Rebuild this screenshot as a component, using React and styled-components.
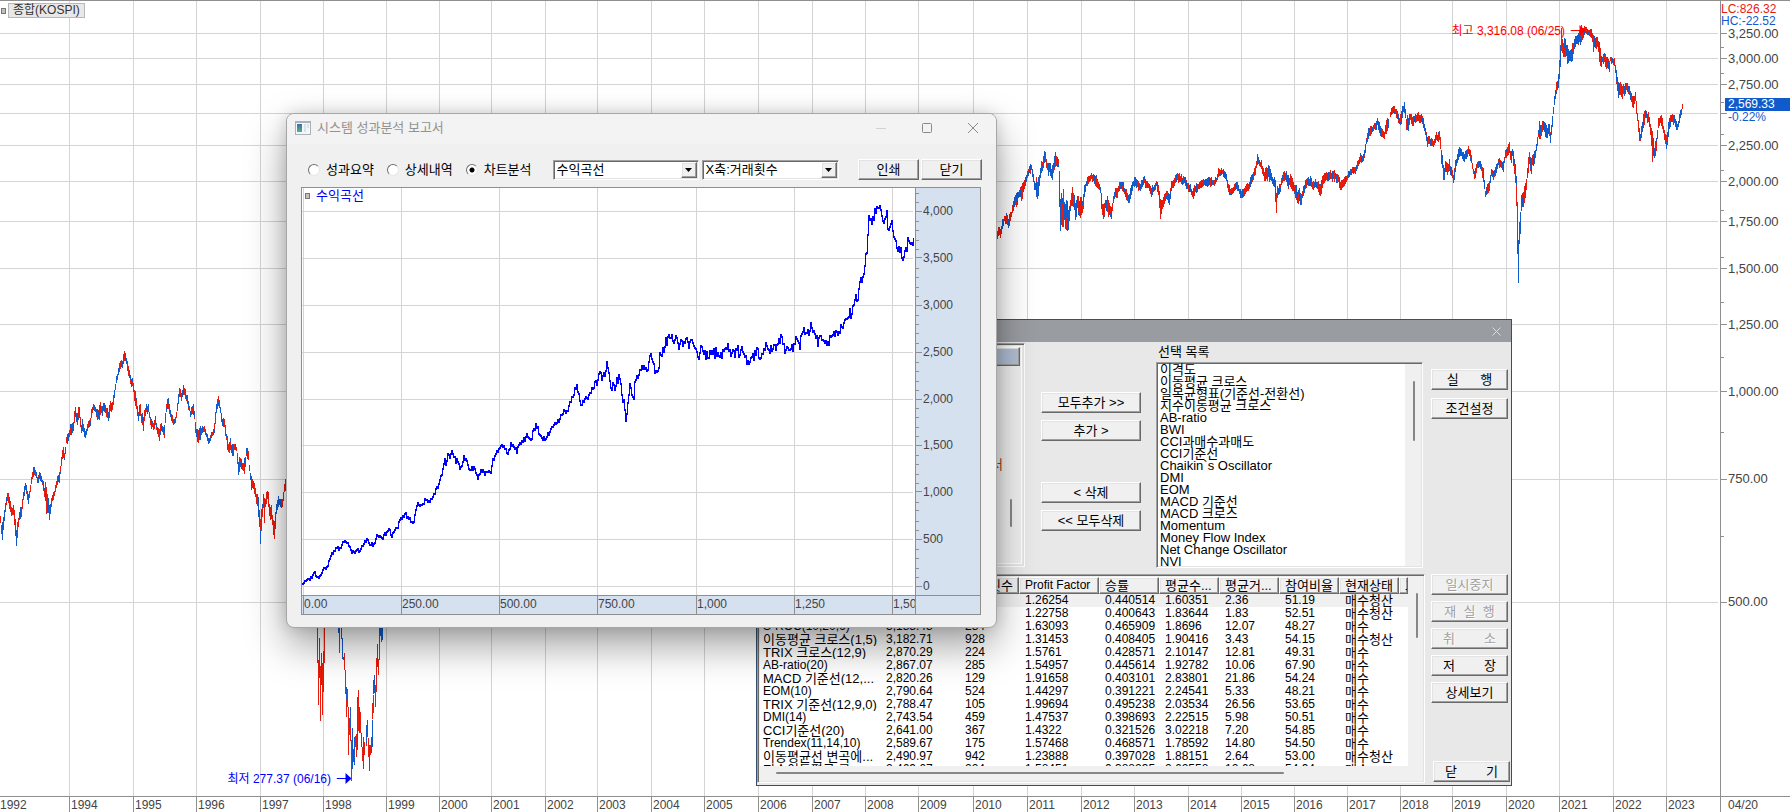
import React from "react";
import styled, { createGlobalStyle, css } from "styled-components";

const SANS = `"Liberation Sans", "Noto Sans CJK KR", sans-serif`;

const RED = "#e81c0c";
const BLUE = "#115acc";
const AXIS = "#8f8f8f";
const GRID = "#d4d4d4";

const GlobalStyle = createGlobalStyle`
  * { box-sizing: border-box; }
  body { margin: 0; background: #fff; font: 13px/16px ${SANS}; color: #000; overflow: hidden; }
  button, select, input { font: inherit; color: inherit; margin: 0; }
`;

/* ---------- chart data ---------- */

const random = (seed) => {
  let s = seed;
  return () => {
    s = (s * 1664525 + 1013904223) % 4294967296;
    return s / 4294967296;
  };
};

// Each run is an origin and a flat list of x, middle, half range, in thirds of a unit.
const RUNS = [
  [0, 330, [0,565,10,5,610,20,12,555,20,20,500,16,27,515,20,33,545,15,40,540,20,48,620,22,56,560,18,63,545,20,68,500,15,75,465,12,84,505,12,90,470,10,97,425,12,101,420,15,107,430,8,112,450,12,118,435,12,125,450,10,133,490,18,138,500,50,142,510,30,146,550,20,152,520,12,158,495,12,163,485,10,170,450,12,177,440,15,183,395,12,188,355,20,193,380,10,198,330,12,205,315,16,212,295,15,218,300,18,224,235,25,230,270,20,236,240,20,242,300,15,247,280,20,254,318,10,262,290,10,270,270,15,277,232,10,285,235,10,292,260,20,300,240,20,306,235,15,312,230,12,318,245,10,325,255,15,330,225,15,336,230,12,342,190,12,348,150,12,356,115,10,361,95,14,366,100,12,372,75,13,378,90,12,384,120,15,391,155,12,397,150,12,402,190,20,408,220,15,414,255,20,418,230,15,424,265,18,430,275,22,437,230,12,444,235,15,450,275,16,456,280,16,461,295,20,464,265,15,470,295,12,476,320,20,481,290,12,487,300,10,492,300,20,497,240,20,501,215,18,507,235,15,514,265,12,520,275,10,527,265,10,532,215,15,538,180,10,543,200,10,548,178,12,555,190,12,562,210,12,570,250,14,578,235,12,582,255,25,587,305,12,592,320,20,597,315,25,603,305,12,608,295,8,614,300,10,620,320,8,626,335,12,633,315,8,640,305,10,645,265,20,650,215,20,655,208,14,660,240,15,666,275,12,672,280,12,678,320,15,684,355,18,690,345,20,697,365,18,702,350,10,708,355,12,714,410,25,720,400,15,727,410,15,732,410,20,738,365,15,743,365,20,748,425,12,753,460,20,758,455,15,765,490,14,773,520,25,780,590,40,784,575,50,788,505,20,792,535,35,798,500,15,803,490,20,807,540,20,813,550,20,819,590,20,823,600,30,827,540,15,833,510,15,840,515,12,846,520,15,852,475,15,858,450,30]],
  [980, 120, [48,370,10,52,340,15,57,330,18,61,345,15,66,310,12,72,295,10,78,295,15,85,305,15,92,285,12,98,260,10,104,235,12,110,240,20,115,220,12,120,215,25,126,215,25,132,195,12,137,175,12,143,155,14,149,145,14,154,140,12,158,165,15,163,200,15,168,200,25,173,205,30,178,170,20,182,145,20,188,130,15,193,105,20,198,125,15,203,145,20,208,140,18,214,160,20,220,140,20,225,120,20,230,120,15,235,130,20,238,260,80,242,270,50,246,275,40,250,260,50,255,280,40,260,300,50,265,280,30,270,260,20,276,225,25,281,250,30,286,270,25,291,245,35,297,270,25,302,255,25,307,260,20,313,210,18,318,190,15,325,175,12,332,170,10,340,175,12,348,185,15,355,195,10,360,205,12,364,260,25,370,270,20,376,250,20,382,260,25,388,275,20,394,275,25,399,235,15,404,215,12,410,220,12,416,200,15,422,190,12,428,200,15,434,215,15,440,225,12,446,235,12,452,210,15,458,190,10,465,180,15,472,190,15,480,205,12,486,185,15,492,180,14,498,195,10,505,195,12,512,215,15,520,205,12,528,190,12,534,215,18,540,265,25,546,250,15,553,235,12,560,220,15,568,240,20,574,190,12,582,185,12,590,170,12,598,172,12,606,180,15,614,182,12,622,200,12,630,205,12,637,222,14,645,205,12,653,200,12,660,190,10,670,188,12,680,185,12,690,185,12,700,187,10,708,180,10,715,155,12,722,152,10,730,158,10,738,168,12,745,210,16,752,215,12,760,205,10,768,195,12,775,205,10,782,225,12,790,220,18,798,205,12,806,195,10,814,175,12,820,165,10,826,140,18,832,115,15,838,130,10,844,135,12,850,160,15,856,165,18,863,155,20,870,160,20,876,180,12,882,185,15,887,240,40,892,215,18,898,205,12,905,175,15,911,165,12,917,170,16,924,185,18,930,180,18,937,195,22,944,210,20,950,235,28,956,225,20,961,240,28,967,215,15,974,195,12,982,185,10,990,185,14,997,195,12,1004,190,12,1012,195,14,1019,205,25,1026,185,15,1034,172,14,1042,165,14,1050,165,14,1058,165,15,1066,170,14,1074,175,15,1080,195,15,1088,190,10,1095,178,12,1102,168,10,1110,155,10,1118,150,10,1126,150,10,1133,130,10,1140,112,10,1147,120,10,1153,100,15,1157,65,12,1163,45,15,1170,30,14,1178,22,10,1185,15,12,1192,5,15,1198,25,15,1205,35,15,1212,40,12,1218,20,18,1226,0,15]],
  [1390, 0, [0,340,10,8,325,10,14,330,10,20,345,12,27,360,12,33,345,20,38,325,12,43,315,15,48,370,20,54,370,20,60,350,12,67,360,15,74,355,12,82,350,14,90,355,15,98,360,15,104,390,12,110,425,15,117,420,12,124,425,12,130,430,12,137,410,12,143,410,12,148,405,12,152,455,30,157,490,15,160,525,25,166,495,18,172,505,18,177,495,15,183,515,12,190,535,15,196,495,20,202,465,15,209,450,12,216,465,12,222,475,12,229,460,15,235,450,15,241,465,15,247,505,15,253,525,12,260,495,12,267,490,12,274,505,10,280,530,25,285,580,18,291,570,15,297,555,15,303,515,12,310,525,12,317,510,12,324,485,14,331,490,12,338,505,14,344,465,12,350,455,14,356,440,16,362,480,25,367,450,18,372,500,25,377,540,30,380,640,70,384,760,80,388,690,40,393,610,30,398,590,25,404,580,18,410,530,20,416,470,25,421,500,25,427,480,15,434,470,15,440,430,15,446,385,25,452,395,16,458,375,15,464,385,20,469,400,25,475,380,12,481,410,20,486,360,20,491,310,15,497,265,15,503,250,15,508,200,30,513,125,35,517,145,35,521,150,40,526,140,20,532,165,25,538,170,20,545,155,25,552,130,16,558,120,14,566,115,25,573,100,20,580,95,14,588,90,10,595,98,10,602,95,12,608,125,25,614,130,20,621,125,12,627,155,25,632,180,18,638,175,15,645,180,15,652,190,20,656,200,25,660,175,12,667,180,12,673,190,15,678,225,20,683,265,30,688,260,18,694,280,20,700,270,15,708,260,12,716,270,14,722,290,18,728,300,18,735,290,15,740,340,25,745,395,20,750,410,15,756,380,18,762,350,18,768,340,14,774,355,15,780,385,15,786,440,40,792,455,20,798,430,18,804,370,20,810,355,14,816,370,15,822,400,15,828,430,25,833,395,20,839,360,15,846,355,12,853,360,12,860,385,12,866,360,12,872,335,12,877,316,6]],
];

// The 1998 trough: x, high, low, rising flag.
const TROUGH = [112,200,310,1,115,300,435,1,118,235,355,0,121,318,482,1,124,280,375,0,124,300,360,1,127,310,466,1,130,272,395,0,133,200,310,1,175,200,220,0,178,200,280,1,183,200,236,0,186,235,298,0,189,290,300,0,192,280,330,1,195,330,402,1,198,380,418,0,198,418,472,1,202,388,442,1,205,440,586,1,208,474,525,1,211,442,500,0,211,500,542,1,214,540,662,1,217,505,628,0,220,567,605,0,223,530,614,0,226,528,560,1,229,522,590,1,232,412,570,0,235,390,512,1,238,440,520,0,241,455,520,1,244,520,560,0,247,562,602,1,250,530,628,0,253,545,585,1,257,545,558,1,259,495,550,0,262,480,530,0,265,535,592,1,268,555,632,0,271,555,585,1,274,530,580,0,277,480,560,0,277,430,478,1,280,405,458,1,280,360,402,0,283,345,400,0,286,375,440,1,289,295,395,1,292,252,322,0,295,297,345,1,298,200,300,1,301,200,228,0,304,200,245,1,307,200,240,0];

function buildPriceBars() {
  const next = random(7);
  const paths = { up: "", down: "" };
  let up = true;
  RUNS.forEach(([ox, oy, v]) => {
    const last = v[v.length - 3];
    let i = 0;
    for (let x = v[0]; x <= last; x += 3) {
      while (i + 5 < v.length && v[i + 3] < x) i += 3;
      const t = i + 3 < v.length ? (x - v[i]) / (v[i + 3] - v[i]) : 0;
      const mid = v[i] === last ? v[i + 1] : v[i + 1] + (v[i + 4] - v[i + 1]) * t;
      const half = v[i] === last ? v[i + 2] : v[i + 2] + (v[i + 5] - v[i + 2]) * t;
      const top = Math.round(oy + (mid - half * (0.4 + next() * 0.85)) / 3);
      const end = Math.round(oy + (mid + half * (0.4 + next() * 0.85)) / 3);
      const px = Math.round(ox + x / 3);
      if (next() < 0.45) up = !up;
      const cut = next() < 0.35 ? Math.round(top + (end - top) * next()) : end;
      paths[up ? "up" : "down"] += `M${px} ${top}h1V${cut + 1}h-1z`;
      if (cut < end) paths[up ? "down" : "up"] += `M${px} ${cut}h1V${end + 1}h-1z`;
    }
  });
  for (let i = 0; i < TROUGH.length; i += 4) {
    const px = Math.round(280 + TROUGH[i] / 3);
    paths[TROUGH[i + 3] ? "up" : "down"] +=
      `M${px} ${Math.round(560 + TROUGH[i + 1] / 3)}h1V${Math.round(560 + TROUGH[i + 2] / 3)}h-1z`;
  }
  return paths;
}

const EQUITY = [5,1200,12,1187,22,1180,32,1165,38,1178,48,1165,52,1150,60,1145,64,1120,72,1105,80,1090,86,1095,95,1068,103,1072,110,1092,118,1105,124,1092,132,1100,140,1078,148,1065,155,1080,165,1075,172,1050,180,1062,190,1048,198,1035,204,1052,210,1030,216,1030,222,1005,228,995,236,990,244,1003,252,1018,256,985,262,958,270,965,278,945,286,952,292,945,298,935,303,905,307,915,312,880,317,870,322,820,325,838,330,795,334,815,338,800,343,815,348,830,352,825,356,855,362,850,365,812,370,825,376,855,382,852,388,845,394,868,398,875,404,855,410,865,416,868,424,865,430,830,436,800,442,795,448,790,454,785,460,800,466,795,472,780,478,795,484,800,490,770,498,765,506,755,514,762,521,742,528,720,534,748,540,760,546,765,552,745,558,742,564,725,570,710,574,718,580,700,586,690,592,670,596,680,602,648,608,640,614,615,618,600,622,630,627,660,634,652,640,638,646,630,652,610,658,600,664,590,668,575,671,550,674,585,678,568,682,560,685,540,690,580,695,600,702,612,708,590,712,575,716,605,722,640,726,670,729,710,732,650,737,610,741,620,745,640,750,570,756,565,762,540,768,550,776,555,783,515,790,550,796,550,801,540,805,510,810,500,815,480,820,470,826,445,832,460,836,470,841,445,846,490,850,460,856,475,862,465,868,485,874,465,880,480,887,500,892,515,898,490,904,500,912,515,918,505,926,505,932,500,938,520,944,512,950,485,958,488,964,505,972,512,977,492,983,512,990,495,996,520,1001,540,1008,525,1014,515,1020,500,1028,510,1036,492,1043,480,1048,500,1055,492,1062,490,1068,470,1075,460,1080,475,1086,500,1094,495,1102,490,1108,465,1113,460,1118,480,1126,430,1132,455,1138,440,1142,415,1147,435,1152,440,1158,475,1164,465,1172,475,1180,480,1186,460,1193,440,1200,445,1207,435,1213,430,1218,415,1223,400,1229,375,1233,400,1238,360,1244,335,1248,345,1253,290,1259,285,1262,280,1264,220,1269,190,1271,110,1274,95,1278,115,1284,88,1289,80,1294,68,1300,90,1306,115,1312,85,1316,130,1321,105,1328,140,1333,160,1337,200,1342,185,1348,225,1353,200,1357,190,1361,155,1366,180,1371,185,1374,170];

function buildEquityPath() {
  const next = random(21);
  const px = (raw) => raw / 2.24 - 2;
  const py = (raw) => raw / 3 - 3;
  let path = "";
  let before = null;
  let i = 0;
  for (let x = 0; x <= 611; x += 1) {
    while (i + 4 < EQUITY.length && px(EQUITY[i + 2]) < x) i += 2;
    const a = px(EQUITY[i]);
    const t = Math.max(0, (x - a) / (px(EQUITY[i + 2]) - a));
    const base = py(EQUITY[i + 1]) + (py(EQUITY[i + 3]) - py(EQUITY[i + 1])) * Math.min(1, t);
    const amp = x < 130 ? 2 : x > 300 ? 5 : 3;
    const y = base + (next() - 0.5) * amp * 2;
    const from = before === null ? y : before;
    const top = Math.round(Math.min(from, y) - 1);
    const end = Math.round(Math.max(from, y) + 1);
    path += `M${x} ${top}h1V${end}h-1z`;
    before = y;
  }
  return path;
}

const BARS = buildPriceBars();
const EQUITY_PATH = buildEquityPath();

const PLOT_W = 1720;
const PLOT_H = 796;
const YEARS = [[1994,69],[1995,133],[1996,196],[1997,260],[1998,323],[1999,386],[2000,439],[2001,491],[2002,545],[2003,597],[2004,651],[2005,704],[2006,758],[2007,812],[2008,865],[2009,918],[2010,973],[2011,1027],[2012,1081],[2013,1134],[2014,1188],[2015,1241],[2016,1294],[2017,1347],[2018,1400],[2019,1452],[2020,1506],[2021,1559],[2022,1613],[2023,1666]];
const PRICES = [["3,250.00",33],["3,000.00",58],["2,750.00",84],["",113],["2,250.00",145],["2,000.00",181],["1,750.00",221],["1,500.00",268],["1,250.00",324],["1,000.00",391],["750.00",479],["500.00",602]];
const MINOR = [47, 73, 102, 134, 170, 210, 257, 302, 357, 432, 536];

const EQ_W = 613;
const EQ_H = 407;
const EQ_Y = [["4,000",23],["3,500",70],["3,000",117],["2,500",164],["2,000",211],["1,500",257],["1,000",304],["500",351],["0",398]];
const EQ_X = [["0.00",1],["250.00",99],["500.00",197],["750.00",295],["1,000",394],["1,250",492],["1,50",590]];

const pct = (v, total) => `${(v / total) * 100}%`;

/* ---------- background chart ---------- */

const Desktop = styled.main`
  position: relative;
  height: 100vh;
  display: grid;
  grid-template: minmax(0, 1fr) 16px / minmax(0, 1fr) 70px;
  overflow: hidden;
  background: #fff;
`;
const Plot = styled.section`
  position: relative;
  border-top: 1px solid ${AXIS};
`;
const Drawing = styled.svg`
  display: block;
  position: absolute;
  inset: 0;
  width: 100%;
  height: 100%;
  shape-rendering: crispEdges;
`;
const PriceAxis = styled.aside`
  position: relative;
  border-top: 1px solid ${AXIS};
  border-left: 1px solid ${AXIS};
`;
const AxisLabel = styled.span`
  position: absolute;
  left: 0;
  display: flex;
  align-items: center;
  gap: 1px;
  height: 14px;
  margin-top: -7px;
  font: 13px/14px ${SANS};
  color: #444;
  white-space: nowrap;
  &::before {
    content: "";
    width: ${(p) => (p.$minor ? "3px" : "6px")};
    border-top: 1px solid ${AXIS};
  }
`;
const Limits = styled.div`
  position: absolute;
  left: 0;
  top: 2px;
  font: 12px/12px ${SANS};
  background: #fff;
  color: ${BLUE};
  & > div:first-child { color: ${RED}; }
`;
const LastPrice = styled.div`
  position: absolute;
  left: 4px;
  right: 0;
  top: 97px;
  font: 12px/13px ${SANS};
  color: ${BLUE};
  & > * { display: block; padding-left: 3px; }
  & > strong { font-weight: 400; color: #fff; background: ${BLUE}; }
`;
const YearAxis = styled.footer`
  position: relative;
  border-top: 1px solid ${AXIS};
  overflow: hidden;
`;
const YearLabel = styled.span`
  position: absolute;
  top: 0;
  height: 16px;
  padding-left: 1px;
  border-left: 1px solid ${(p) => (p.$first ? "transparent" : AXIS)};
  font: 12px/17px ${SANS};
  color: #444;
`;
const DateCorner = styled.div`
  border-top: 1px solid ${AXIS};
  border-left: 1px solid ${AXIS};
  padding-left: 7px;
  font: 12px/17px ${SANS};
  color: #444;
`;
const SeriesTag = styled.div`
  position: absolute;
  left: 1px;
  top: 2px;
  display: flex;
  align-items: center;
  gap: 2px;
  font: 12px/13px ${SANS};
  color: #333;
  & > span { padding: 0 4px; background: #e8e8e8; border: 1px solid #b8b8b8; }
`;
const Handle = styled.i`
  width: 5px;
  height: 6px;
  background: #c0c0c0;
  border: 1px solid #777;
`;
const Extreme = styled.div`
  position: absolute;
  display: flex;
  align-items: center;
  gap: 6px;
  font: 12px/14px ${SANS};
  white-space: nowrap;
  transform: translateX(-100%);
  color: ${(p) => (p.$low ? "#00f" : "#f00")};
`;

function Arrow() {
  return (
    <svg width="15" height="12" viewBox="0 0 15 12" fill="currentColor" aria-hidden="true">
      <path d="M0 5h9v1H0zM9 0l6 5.500-6 5.500z" />
    </svg>
  );
}

function Grid({ w, h, xs, ys, color }) {
  return (
    <g fill={color}>
      {ys.map(([, y]) => <rect key={`y${y}`} x="0" y={y} width={w} height="1" />)}
      {xs.map(([, x]) => <rect key={`x${x}`} x={x} y="0" width="1" height={h} />)}
    </g>
  );
}

/* ---------- shared controls ---------- */

const bevelOut = css`
  border: 1px solid;
  border-color: #fff #696969 #696969 #fff;
  box-shadow: inset -1px -1px 0 #a0a0a0, inset 1px 1px 0 #e3e3e3;
`;
const bevelIn = css`
  border: 1px solid;
  border-color: #a0a0a0 #fff #fff #a0a0a0;
  box-shadow: inset 1px 1px 0 #696969, inset -1px -1px 0 #e3e3e3;
`;
const PushButton = styled.button`
  ${bevelOut}
  width: ${(p) => p.$w || 77}px;
  height: 21px;
  padding: 0;
  background: #f0f0f0;
  font: 13px/17px ${SANS};
  white-space: pre;
  &:disabled { color: #a0a0a0; text-shadow: 1px 1px 0 #fff; }
`;
const Thumb = styled.div`
  position: absolute;
  background: #868686;
  border-radius: 1px;
`;

/* ---------- system trading dialog ---------- */

const SystemWindow = styled.section`
  position: absolute;
  left: 756px;
  top: 319px;
  width: 756px;
  height: 467px;
  display: flex;
  flex-direction: column;
  border: 1px solid #34506c;
  background: #e8e8e8;
`;
const SystemTitle = styled.header`
  height: 22px;
  display: flex;
  align-items: center;
  justify-content: flex-end;
  padding-right: 10px;
  background: #999ca1;
`;
const BareButton = styled.button`
  display: grid;
  place-items: center;
  border: 0;
  padding: 0;
  background: none;
  color: ${(p) => p.$c || "#888"};
`;
const Upper = styled.div`
  display: flex;
  height: 232px;
`;
const SourceGroup = styled.div`
  ${bevelIn}
  width: 268px;
  height: 224px;
  margin-top: 1px;
  padding: 2px;
`;
const SourceBox = styled.div`
  position: relative;
  height: 218px;
  padding: 0 1px;
  border: 1px solid #fff;
  background: #efefef;
`;
const SourceHeader = styled.div`
  ${bevelOut}
  height: 19px;
  background: #b0bfd3;
`;
const SourceItem = styled.div`
  padding: 91px 17px 0 0;
  text-align: right;
  color: #8a4018;
`;
const MoveButtons = styled.div`
  display: flex;
  flex-direction: column;
  gap: 7px;
  width: 100px;
  margin: 50px 15px 0 16px;
  & > :nth-child(3) { margin-top: 34px; }
`;
const Selected = styled.div`
  flex: 1;
  display: flex;
  flex-direction: column;
`;
const SelectedLabel = styled.div`
  height: 20px;
  padding-left: 2px;
  font: 13px/20px ${SANS};
`;
const ListBox = styled.ul`
  ${bevelIn}
  position: relative;
  flex: none;
  height: 206px;
  margin: 0;
  padding: 1px 15px 1px 3px;
  list-style: none;
  overflow: hidden;
  background: linear-gradient(270deg, #f0f0f0 17px, #fff 17px);
  font: 13px/12px ${SANS};
  white-space: nowrap;
`;
const SideButtons = styled.div`
  display: flex;
  flex-direction: column;
  gap: 8px;
  padding: 27px 3px 0 8px;
`;
const Lower = styled.div`
  display: flex;
  flex: 1;
`;
const ResultBox = styled.div`
  ${bevelIn}
  position: relative;
  flex: 1;
  min-width: 0;
  height: 209px;
  padding: 2px 16px 17px 2px;
  background: #f0f0f0;
`;
const ResultClip = styled.div`
  height: 189px;
  overflow: hidden;
  background: #fff;
`;
const Table = styled.table`
  table-layout: fixed;
  width: 648px;
  border-collapse: separate;
  border-spacing: 0;
  white-space: nowrap;
`;
const Th = styled.th`
  ${bevelOut}
  height: 17px;
  padding: 0 0 0 5px;
  overflow: hidden;
  background: #f0f0f0;
  font: ${(p) => (p.$latin ? 12 : 13)}px/13px ${SANS};
  text-align: left;
  text-overflow: clip;
`;
const Td = styled.td`
  height: 13px;
  padding: 0 0 0 6px;
  overflow: hidden;
  font: ${(p) => (p.$latin ? 12 : 13)}px/13px ${SANS};
  &:first-child { padding-left: 3px; }
  tr:first-child > & { background: #f0f0f0; }
`;
const LowerButtons = styled.div`
  display: flex;
  flex-direction: column;
  gap: 6px;
  padding: 0 1px 3px 6px;
  & > :last-child { margin: auto 0 0 2px; }
`;

const SELECTED = ["이격도", "이동평균 크로스", "일목균형표(기준선-전환선)", "지수이동평균 크로스", "AB-ratio", "BWI", "CCI과매수과매도", "CCI기준선", "Chaikin`s Oscillator", "DMI", "EOM", "MACD 기준선", "MACD 크로스", "Momentum", "Money Flow Index", "Net Change Oscillator", "NVI"];
const COLUMNS = [["", 120], ["", 79], ["매매횟수", 60], ["Profit Factor", 80], ["승률", 60], ["평균수...", 60], ["평균거...", 60], ["참여비율", 60], ["현재상태", 60], ["그", 9]];
const RESULTS = [
  ["", "", "", "1.26254", "0.440514", "1.60351", "2.36", "51.19", "매수청산"],
  ["", "", "", "1.22758", "0.400643", "1.83644", "1.83", "52.51", "매수청산"],
  ["S-ROC(10,20,6)", "3,188.48", "284", "1.63093", "0.465909", "1.8696", "12.07", "48.27", "매수"],
  ["이동평균 크로스(1,5)", "3,182.71", "928", "1.31453", "0.408405", "1.90416", "3.43", "54.15", "매수청산"],
  ["TRIX 크로스(12,9)", "2,870.29", "224", "1.5761", "0.428571", "2.10147", "12.81", "49.31", "매수"],
  ["AB-ratio(20)", "2,867.07", "285", "1.54957", "0.445614", "1.92782", "10.06", "67.90", "매수"],
  ["MACD 기준선(12,...", "2,820.26", "129", "1.91658", "0.403101", "2.83801", "21.86", "54.24", "매수"],
  ["EOM(10)", "2,790.64", "524", "1.44297", "0.391221", "2.24541", "5.33", "48.21", "매수"],
  ["TRIX 기준선(12,9,0)", "2,788.47", "105", "1.99694", "0.495238", "2.03534", "26.56", "53.65", "매수"],
  ["DMI(14)", "2,743.54", "459", "1.47537", "0.398693", "2.22515", "5.98", "50.51", "매수"],
  ["CCI기준선(20)", "2,641.00", "367", "1.4322", "0.321526", "3.02218", "7.20", "54.85", "매수"],
  ["Trendex(11,14,10)", "2,589.67", "175", "1.57468", "0.468571", "1.78592", "14.80", "54.50", "매수"],
  ["이동평균선 변곡에...", "2,490.97", "942", "1.23888", "0.397028", "1.88151", "2.64", "53.00", "매수청산"],
  ["지수이동평균 크...", "2,469.67", "224", "1.58451", "0.388235", "2.62558", "12.68", "54.94", "매수"],
];

const isLatin = (text) => /^[\x20-\x7e]+$/.test(text);

function SystemDialog() {
  return (
    <SystemWindow aria-label="시스템 트레이딩">
      <SystemTitle>
        <BareButton $c="#dcdcdc" aria-label="닫기">
          <svg width="9" height="9" viewBox="0 0 9 9" stroke="currentColor"><path d="M.5.5l8 8M8.500.5l-8 8" /></svg>
        </BareButton>
      </SystemTitle>
      <Upper>
        <SourceGroup>
          <SourceBox>
            <SourceHeader />
            <SourceItem>서</SourceItem>
            <Thumb style={{ right: 9, top: 152, width: 2, height: 28 }} />
          </SourceBox>
        </SourceGroup>
        <MoveButtons>
          <PushButton $w={100}>{"모두추가 >>"}</PushButton>
          <PushButton $w={100}>{"추가 >"}</PushButton>
          <PushButton $w={100}>{"< 삭제"}</PushButton>
          <PushButton $w={100}>{"<< 모두삭제"}</PushButton>
        </MoveButtons>
        <Selected>
          <SelectedLabel id="selected-label">선택 목록</SelectedLabel>
          <ListBox role="listbox" aria-labelledby="selected-label">
            {SELECTED.map((name) => <li key={name} role="option" aria-selected="false">{name}</li>)}
            <Thumb as="li" role="presentation" style={{ right: 7, top: 18, width: 2, height: 60 }} />
          </ListBox>
        </Selected>
        <SideButtons>
          <PushButton>{"실      행"}</PushButton>
          <PushButton>조건설정</PushButton>
        </SideButtons>
      </Upper>
      <Lower>
        <ResultBox>
          <ResultClip>
            <Table>
              <colgroup>{COLUMNS.map(([, w], i) => <col key={i} width={w} />)}</colgroup>
              <thead>
                <tr>{COLUMNS.map(([name], i) => <Th key={i} scope="col" $latin={isLatin(name)}>{name}</Th>)}</tr>
              </thead>
              <tbody>
                {RESULTS.map((row, i) => (
                  <tr key={i}>
                    {row.map((cell, j) => <Td key={j} $latin={isLatin(cell)}>{cell}</Td>)}
                    <Td />
                  </tr>
                ))}
              </tbody>
            </Table>
          </ResultClip>
          <Thumb style={{ right: 6, top: 18, width: 2, height: 45 }} />
          <Thumb style={{ left: 18, bottom: 8, width: 508, height: 2 }} />
        </ResultBox>
        <LowerButtons>
          <PushButton disabled>일시중지</PushButton>
          <PushButton disabled>{"재  실  행"}</PushButton>
          <PushButton disabled>{"취        소"}</PushButton>
          <PushButton>{"저        장"}</PushButton>
          <PushButton>상세보기</PushButton>
          <PushButton>{"닫        기"}</PushButton>
        </LowerButtons>
      </Lower>
    </SystemWindow>
  );
}

/* ---------- report window ---------- */

const ReportWindow = styled.section`
  position: absolute;
  left: 286px;
  top: 113px;
  width: 711px;
  height: 515px;
  display: flex;
  flex-direction: column;
  overflow: hidden;
  border: 1px solid #a6a6a6;
  border-radius: 8px;
  background: #f0f0f0;
`;
const ReportShadow = styled.div`
  position: absolute;
  left: 287px;
  top: 114px;
  width: 709px;
  height: 513px;
  border-radius: 8px;
  box-shadow: 0 18px 40px rgba(0, 0, 0, 0.38), 0 0 16px rgba(0, 0, 0, 0.16);
`;
const ReportTitle = styled.header`
  height: 30px;
  display: flex;
  align-items: center;
  gap: 6px;
  padding: 0 18px 2px 8px;
  background: #f3f3f3;
  color: #929292;
  font: 13px/20px ${SANS};
  & > h1 { flex: 1; margin: 0; font: inherit; }
  & > svg { flex: none; }
`;
const WindowButtons = styled.div`
  display: flex;
  gap: 36px;
`;
const Toolbar = styled.form`
  display: flex;
  align-items: center;
  height: 43px;
  padding: 9px 14px 0 21px;
`;
const RadioGroup = styled.div`
  display: flex;
  gap: 13px;
  margin-right: 21px;
`;
const RadioLabel = styled.label`
  display: flex;
  align-items: center;
  gap: 6px;
  font: 13px/16px ${SANS};
`;
const Radio = styled.input`
  appearance: none;
  width: 12px;
  height: 12px;
  border: 1px solid;
  border-color: #707070 #e6e6e6 #e6e6e6 #707070;
  border-radius: 50%;
  background: #fff;
  &:checked { background: radial-gradient(circle, #000 2px, #fff 3px); }
`;
const Combo = styled.div`
  ${bevelIn}
  position: relative;
  width: ${(p) => p.$w}px;
  height: 20px;
  margin-right: 3px;
  background: #fff;
  & > select {
    appearance: none;
    display: block;
    width: 100%;
    height: 18px;
    padding: 0 20px 0 3px;
    border: 0;
    outline: 0;
    background: none;
    font: 13px/18px ${SANS};
  }
  & > span {
    ${bevelOut}
    position: absolute;
    top: 1px;
    right: 1px;
    width: 16px;
    height: 16px;
    display: grid;
    place-items: center;
    background: #f0f0f0;
    pointer-events: none;
  }
`;
const ToolButtons = styled.div`
  display: flex;
  gap: 2px;
  margin-left: auto;
  margin-top: -1px;
`;
const EquityChart = styled.div`
  flex: none;
  display: grid;
  grid-template: minmax(0, 1fr) 19px / minmax(0, 1fr) 65px;
  height: 428px;
  margin: 0 15px 0 14px;
  border: 1px solid ${AXIS};
  background: #d6e1f0;
`;
const EquityPlot = styled.div`
  position: relative;
  background: #fff;
`;
const EquityTag = styled.div`
  position: absolute;
  left: 3px;
  top: 0;
  display: flex;
  align-items: center;
  gap: 6px;
  color: #00f;
  font: 13px/16px ${SANS};
`;
const EquityYAxis = styled.div`
  position: relative;
  border-left: 1px solid ${AXIS};
  & > ${AxisLabel} { font: 12px/14px ${SANS}; }
`;
const EquityXAxis = styled.div`
  position: relative;
  overflow: hidden;
  border-top: 1px solid ${AXIS};
  & > span {
    position: absolute;
    top: 0;
    height: 19px;
    border-left: 1px solid ${AXIS};
    font: 12px/17px ${SANS};
    color: #444;
  }
`;
const EquityCorner = styled.div`
  border-top: 1px solid ${AXIS};
  border-left: 1px solid ${AXIS};
`;

function DropDown({ label, value, width }) {
  return (
    <Combo $w={width}>
      <select aria-label={label} defaultValue={value}><option>{value}</option></select>
      <span><svg width="7" height="4" viewBox="0 0 7 4"><path d="M0 0h7L3.500 4z" /></svg></span>
    </Combo>
  );
}

function ReportDialog() {
  const minors = EQ_Y.flatMap(([, y]) => [y - 9, y - 18, y - 28, y - 37]).filter((y) => y > 4);
  return (
    <ReportWindow aria-label="시스템 성과분석 보고서">
      <ReportTitle>
        <svg width="16" height="14" viewBox="0 0 16 14">
          <defs>
            <linearGradient id="pane" x2="0" y2="1"><stop stopColor="#3d6ea8" /><stop offset="1" stopColor="#57b08c" /></linearGradient>
          </defs>
          <path fill="#aab2bb" d="M0 0h16v14H0z" />
          <path fill="#f4f6f8" d="M1 2h14v11H1z" />
          <path fill="url(#pane)" d="M2 3h5v8H2z" />
          <path fill="#dde2e6" d="M9 3h2v8H9zM12 3h2v4h-2z" />
        </svg>
        <h1>시스템 성과분석 보고서</h1>
        <WindowButtons>
          <BareButton $c="#d2d2d2" aria-label="최소화"><svg width="10" height="10" viewBox="0 0 10 10"><path fill="currentColor" d="M0 5h10v1H0z" /></svg></BareButton>
          <BareButton aria-label="최대화"><svg width="10" height="10" viewBox="0 0 10 10" fill="none" stroke="currentColor"><rect x=".5" y=".5" width="9" height="9" rx="1" /></svg></BareButton>
          <BareButton aria-label="닫기"><svg width="10" height="10" viewBox="0 0 10 10" stroke="currentColor"><path d="M0 0l10 10M10 0L0 10" /></svg></BareButton>
        </WindowButtons>
      </ReportTitle>
      <Toolbar>
        <RadioGroup role="radiogroup" aria-label="보기">
          <RadioLabel><Radio type="radio" name="view" />성과요약</RadioLabel>
          <RadioLabel><Radio type="radio" name="view" />상세내역</RadioLabel>
          <RadioLabel><Radio type="radio" name="view" defaultChecked />차트분석</RadioLabel>
        </RadioGroup>
        <DropDown label="곡선" value="수익곡선" width={146} />
        <DropDown label="X축" value="X축:거래횟수" width={137} />
        <ToolButtons>
          <PushButton type="button" $w={61}>인쇄</PushButton>
          <PushButton type="button" $w={61}>닫기</PushButton>
        </ToolButtons>
      </Toolbar>
      <EquityChart>
        <EquityPlot>
          <Drawing viewBox={`0 0 ${EQ_W} ${EQ_H}`} preserveAspectRatio="none">
            <Grid w={EQ_W - 2} h={EQ_H} xs={EQ_X} ys={EQ_Y} color={GRID} />
            <path d={EQUITY_PATH} fill="#00f" />
          </Drawing>
          <EquityTag><Handle />수익곡선</EquityTag>
        </EquityPlot>
        <EquityYAxis>
          {EQ_Y.map(([t, y]) => <AxisLabel key={t} style={{ top: pct(y, EQ_H) }}>{t}</AxisLabel>)}
          {minors.map((y) => <AxisLabel key={y} $minor style={{ top: pct(y, EQ_H) }} />)}
        </EquityYAxis>
        <EquityXAxis>
          {EQ_X.map(([t, x]) => <span key={t} style={{ left: pct(x, EQ_W) }}>{t}</span>)}
        </EquityXAxis>
        <EquityCorner />
      </EquityChart>
    </ReportWindow>
  );
}

export default function App() {
  return (
    <>
      <GlobalStyle />
      <Desktop>
        <Plot>
          <Drawing viewBox={`0 1 ${PLOT_W} ${PLOT_H - 1}`} preserveAspectRatio="none">
            <Grid w={PLOT_W - 2} h={PLOT_H} xs={YEARS} ys={PRICES} color={GRID} />
            <path d={BARS.up} fill={RED} />
            <path d={BARS.down} fill={BLUE} />
          </Drawing>
          <SeriesTag><Handle /><span>종합(KOSPI)</span></SeriesTag>
          <Extreme style={{ left: pct(1586, PLOT_W), top: pct(23, PLOT_H) }}>최고 3,316.08 (06/25)<Arrow /></Extreme>
          <Extreme $low style={{ left: pct(352, PLOT_W), top: pct(772, PLOT_H) }}>최저 277.37 (06/16)<Arrow /></Extreme>
        </Plot>
        <PriceAxis>
          {PRICES.map(([t, y]) => <AxisLabel key={y} style={{ top: pct(y, PLOT_H) }}>{t}</AxisLabel>)}
          {MINOR.map((y) => <AxisLabel key={y} $minor style={{ top: pct(y, PLOT_H) }} />)}
          <Limits><div>LC:826.32</div><div>HC:-22.52</div></Limits>
          <LastPrice><strong>2,569.33</strong><span>-0.22%</span></LastPrice>
        </PriceAxis>
        <YearAxis>
          <YearLabel $first style={{ left: -2 }}>1992</YearLabel>
          {YEARS.map(([t, x]) => <YearLabel key={t} style={{ left: pct(x, PLOT_W) }}>{t}</YearLabel>)}
        </YearAxis>
        <DateCorner>04/20</DateCorner>
        <SystemDialog />
        <ReportShadow />
        <ReportDialog />
      </Desktop>
    </>
  );
}
